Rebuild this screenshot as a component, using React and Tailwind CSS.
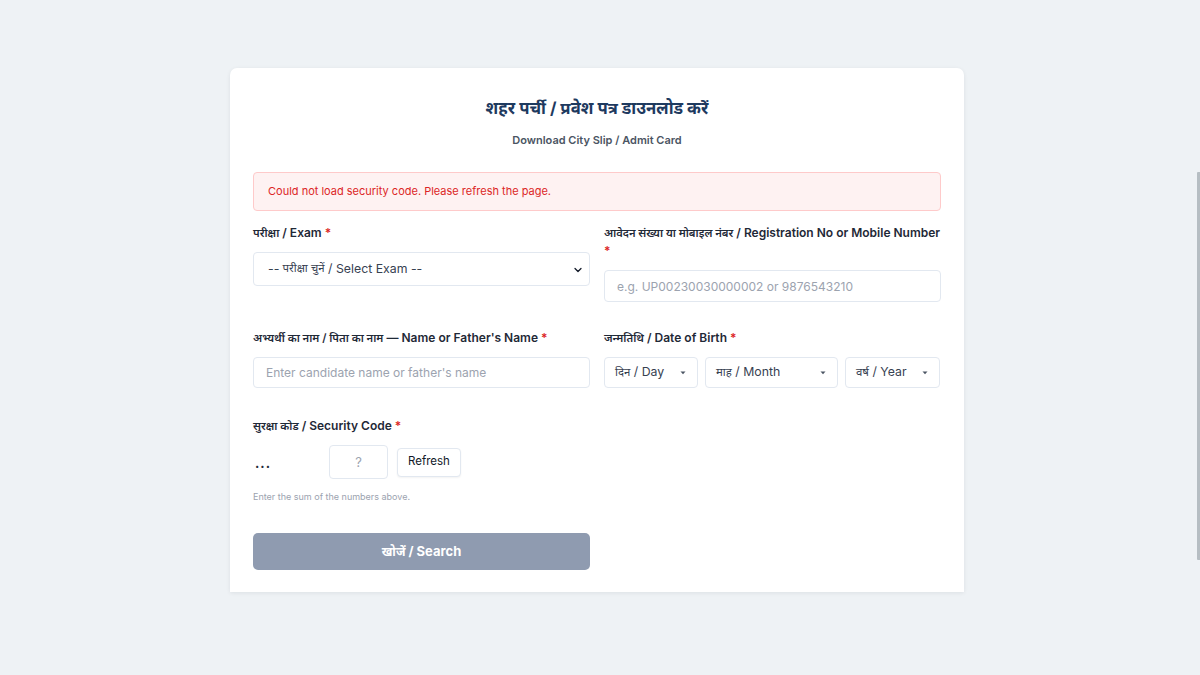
import { ChevronDown } from "lucide-react";

const font = { fontFamily: "Inter, 'Noto Sans', 'Noto Sans Devanagari', sans-serif" };

// Devanagari runs come out a bit wide in the fallback font, so scale them down
const Hi = ({ children }) => <span className="text-[0.93em]">{children}</span>;

const Label = ({ children, breakStar }) => (
  <label className="block text-[12px] leading-[18px] font-semibold text-[#1f2937] mb-[10px]">
    {children}{" "}
    <span className={breakStar ? "block text-[#dc2626]" : "text-[#dc2626]"}>*</span>
  </label>
);

const DateSelect = ({ hi, en, width }) => (
  <div className={`relative h-[31px] ${width} rounded-[4px] border border-[#e2e8f0] bg-white flex items-center pl-[10px] text-[12.3px] text-[#374151]`}>
    <Hi>{hi}</Hi>&nbsp;/ {en}
    <svg className="absolute right-[11px] top-[13px]" width="6" height="4" viewBox="0 0 6 4">
      <path d="M0.5 0.5 L3 3.2 L5.5 0.5 Z" fill="#4b5563" />
    </svg>
  </div>
);

const App = () => {
  return (
    <div className="min-h-[675px] bg-[#eef2f5] pt-[68px] pr-[6px]" style={font}>
      <div className="mx-auto w-[734px] bg-white rounded-t-[7px] shadow-[0_1px_4px_rgba(15,23,42,0.08)] px-[23px] pt-[26px] pb-[22px]">
        <h1 className="text-center text-[18px] leading-[28px] font-bold text-[#1e3a5f]">
          <Hi>शहर पर्ची / प्रवेश पत्र डाउनलोड करें</Hi>
        </h1>
        <p className="text-center text-[11px] leading-[16px] font-semibold text-[#4b5563] mt-[10px]">
          Download City Slip / Admit Card
        </p>

        <div className="mt-[24px] h-[39px] rounded-[4px] border border-[#fecaca] bg-[#fef2f2] flex items-center px-[14px] text-[11px] text-[#dc2626]">
          Could not load security code. Please refresh the page.
        </div>

        <div className="grid grid-cols-2 gap-x-[14px] gap-y-[27px] mt-[13px]">
          <div>
            <Label><Hi>परीक्षा</Hi> / Exam</Label>
            <div className="relative h-[34px] rounded-[4px] border border-[#e2e8f0] bg-white flex items-center pl-[14px] text-[12.3px] text-[#374151]">
              -- <Hi>&nbsp;परीक्षा चुनें</Hi>&nbsp;/ Select Exam --
              <ChevronDown className="absolute right-[5px] top-[11px] w-[12px] h-[12px] text-[#111827]" strokeWidth={2.5} />
            </div>
          </div>
          <div>
            <Label breakStar>
              <span className="whitespace-nowrap"><Hi>आवेदन संख्या या मोबाइल नंबर</Hi> / Registration No or Mobile Number</span>
            </Label>
            <input
              className="w-full h-[32px] rounded-[4px] border border-[#e2e8f0] px-[12px] text-[12px] placeholder:text-[#9ca3af] outline-none"
              placeholder="e.g. UP00230030000002 or 9876543210"
            />
          </div>

          <div>
            <Label><Hi>अभ्यर्थी का नाम / पिता का नाम</Hi> — Name or Father's Name</Label>
            <input
              className="w-full h-[31px] rounded-[4px] border border-[#e2e8f0] px-[12px] text-[12px] placeholder:text-[#9ca3af] outline-none"
              placeholder="Enter candidate name or father's name"
            />
          </div>
          <div>
            <Label><Hi>जन्मतिथि</Hi> / Date of Birth</Label>
            <div className="flex gap-[7px]">
              <DateSelect hi="दिन" en="Day" width="w-[94px]" />
              <DateSelect hi="माह" en="Month" width="w-[133px]" />
              <DateSelect hi="वर्ष" en="Year" width="w-[95px]" />
            </div>
          </div>

          <div className="pt-[2px]">
            <Label><Hi>सुरक्षा कोड</Hi> / Security Code</Label>
            <div className="flex items-center mt-[2px]">
              <span className="w-[76px] pl-[2px] text-[13px] font-bold text-[#1f2937] tracking-[1px] pt-[4px]">...</span>
              <input
                className="w-[59px] h-[34px] rounded-[4px] border border-[#e2e8f0] text-center text-[13px] placeholder:text-[#9ca3af] outline-none"
                placeholder="?"
              />
              <button className="ml-[9px] h-[29px] px-[10px] rounded-[4px] border border-[#e2e8f0] bg-white text-[11.5px] text-[#111827] shadow-[0_1px_2px_rgba(0,0,0,0.05)]">
                Refresh
              </button>
            </div>
            <p className="mt-[12px] text-[9px] leading-[12px] text-[#9ca3af]">Enter the sum of the numbers above.</p>
            <button className="mt-[30px] w-full h-[37px] rounded-[5px] bg-[#8f9bb0] text-white text-[13px] font-bold">
              <Hi>खोजें</Hi> / Search
            </button>
          </div>
        </div>
      </div>
      <div className="fixed right-0 top-[172px] w-[3px] h-[388px] bg-[#b6bec3] rounded-l-[1px]" />
    </div>
  );
};

export default App;
